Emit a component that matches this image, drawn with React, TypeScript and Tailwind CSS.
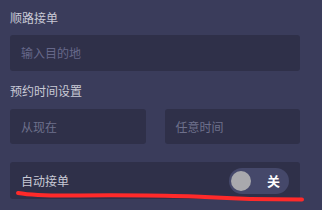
export default function App() {
    return (
        <div
            className="relative w-[322px] h-[210px] overflow-hidden bg-[#3a3c5b] pl-[10px] pr-[22px] pt-[10px]"
            style={{ fontFamily: '"Noto Sans CJK SC", "Noto Sans", sans-serif' }}
        >
            <div className="h-4 text-[12px] leading-4 text-[#c9cad6]">顺路接单</div>
            <div className="mt-[9px] flex h-9 items-center rounded-[3px] bg-[#2f3049] px-[11px] text-[12px] text-[#66688a]">
                输入目的地
            </div>

            <div className="mt-[12px] h-4 text-[12px] leading-4 text-[#c9cad6]">预约时间设置</div>
            <div className="mt-[10px] grid grid-cols-2 gap-[19px]">
                <div className="flex h-[35px] items-center rounded-[3px] bg-[#2f3049] px-[11px] text-[12px] text-[#6e708c]">
                    从现在
                </div>
                <div className="flex h-[35px] items-center rounded-[3px] bg-[#2f3049] px-[11px] text-[12px] text-[#6e708c]">
                    任意时间
                </div>
            </div>

            <div className="mt-[18px] flex h-[37px] items-center justify-between rounded-[3px] bg-[#2f3049] pl-[11px] pr-[11px]">
                <span className="text-[12px] text-[#c9cad6]">自动接单</span>
                <div className="flex h-[26px] w-[60px] items-center justify-between rounded-full bg-[#45486a] pl-[2px] pr-[9px]">
                    <span className="h-5 w-5 rounded-full bg-[#a9a9ad]" />
                    <span className="text-[13px] font-bold text-white">关</span>
                </div>
            </div>

            <svg className="pointer-events-none absolute inset-0" width="322" height="210" viewBox="0 0 322 210">
                <path
                    d="M18 193 C 30 195, 45 196, 80 195.5 S 180 195.5, 205 197 S 270 199.5, 302 199.5"
                    fill="none"
                    stroke="#ff2a2a"
                    strokeWidth="4"
                    strokeLinecap="round"
                />
            </svg>
        </div>
    );
}
